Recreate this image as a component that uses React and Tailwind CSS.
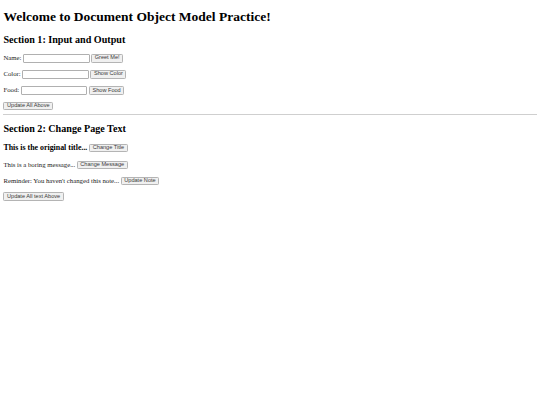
export default function App() {
  const btn =
    "inline-flex items-center justify-center h-[8.6px] px-[2.6px] bg-[#f0f0f0] border border-[#b4b4b4] rounded-[1.3px] text-[5.6px] leading-none text-[#3a3a3a] font-['Liberation_Sans',Arial,sans-serif] whitespace-nowrap";
  const input =
    "inline-block w-[66.5px] h-[9px] bg-white border border-[#b0b0b0] rounded-[1px]";
  const row = "flex items-center h-[9.3px] mb-[6.75px] text-[6.75px] leading-none text-[#222]";
  return (
    <div className="min-h-[405px] w-[540px] bg-white px-[3.4px] pt-[9.05px] text-black font-['Liberation_Serif','Times_New_Roman',serif]">
      <h1 className="text-[13.5px] leading-[15.5px] font-bold mb-[9.05px]">
        Welcome to Document Object Model Practice!
      </h1>
      <h2 className="text-[10.125px] leading-[11.6px] font-bold mb-[8.4px]">
        Section 1: Input and Output
      </h2>
      <div className={row}>
        <span>Name:</span>
        <span className={input + " ml-[1.7px]"}></span>
        <span className={btn + " ml-[1.5px]"}>Greet Me!</span>
      </div>
      <div className={row}>
        <span>Color:</span>
        <span className={input + " ml-[1.7px]"}></span>
        <span className={btn + " ml-[1.5px]"}>Show Color</span>
      </div>
      <div className={row}>
        <span>Food:</span>
        <span className={input + " ml-[1.7px]"}></span>
        <span className={btn + " ml-[1.5px]"}>Show Food</span>
      </div>
      <div className="flex items-center h-[8.8px]">
        <span className={btn}>Update All Above</span>
      </div>
      <div className="mt-[3.4px] mb-[3.4px] h-px bg-[#cfcfcf]"></div>
      <h2 className="text-[10.125px] leading-[11.6px] font-bold mt-[8.4px] mb-[8.4px]">
        Section 2: Change Page Text
      </h2>
      <div className="flex items-center h-[9.1px] mb-[7.9px] text-[7.9px] leading-none font-bold">
        <span>This is the original title...</span>
        <span className={btn + " ml-[1.8px] font-normal"}>Change Title</span>
      </div>
      <div className={row}>
        <span>This is a boring message...</span>
        <span className={btn + " ml-[1.5px]"}>Change Message</span>
      </div>
      <div className={row}>
        <span>Reminder: You haven't changed this note...</span>
        <span className={btn + " ml-[1.5px]"}>Update Note</span>
      </div>
      <div className="flex items-center h-[8.8px]">
        <span className={btn}>Update All text Above</span>
      </div>
    </div>
  );
}
